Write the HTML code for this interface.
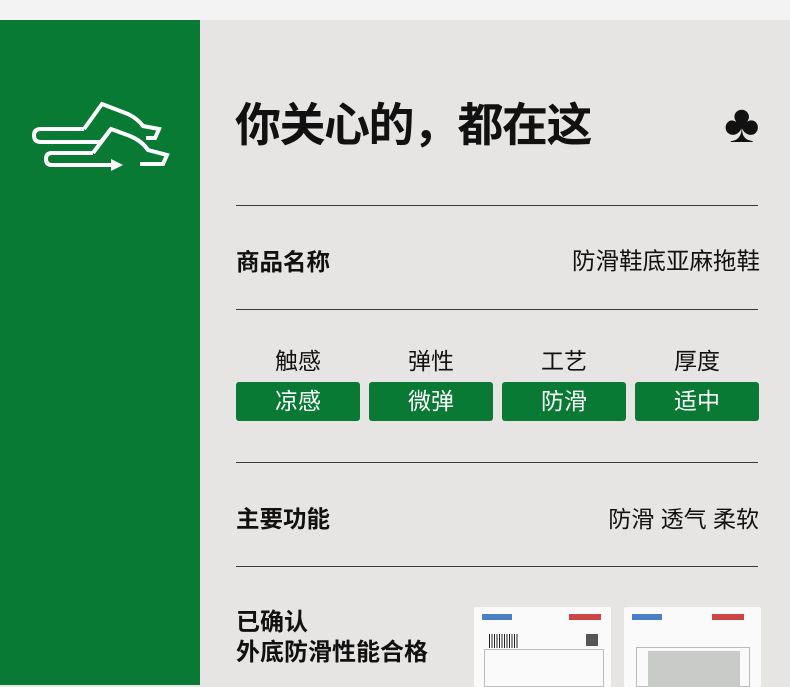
<!DOCTYPE html>
<html><head><meta charset="utf-8"><style>
*{margin:0;padding:0;box-sizing:border-box}
body{width:790px;height:685px;overflow:hidden;background:#e6e5e3;font-family:"Liberation Sans","Noto Sans CJK SC",sans-serif;color:#111;position:relative}
.top{position:absolute;left:0;top:0;width:790px;height:20px;background:#f3f3f3}
.green{position:absolute;left:0;top:20px;width:200px;height:665px;background:#087a33}
.t{position:absolute;white-space:nowrap}
.line{position:absolute;left:236px;width:522px;height:1px;background:#3a3a3a}
.btn{position:absolute;top:382px;width:124px;height:39px;background:#087a33;border-radius:3px;color:#fff;font-size:23px;text-align:center;line-height:39px}
.lab{position:absolute;top:346px;width:124px;text-align:center;font-size:23px;line-height:30px}
.doc{position:absolute;top:607px;width:137px;height:80px;background:#fafafa;border-radius:2px}
</style></head><body>
<div class="top"></div>
<div class="green"></div>
<svg width="200" height="685" style="position:absolute;left:0;top:0" viewBox="0 0 200 685">
<g fill="none" stroke="#fff" stroke-width="4" stroke-linejoin="miter" stroke-linecap="butt">
<path d="M84,129 L41,129 Q34,129 34,135.5 Q34,142 41,142 L101,142 L111,129 L130,136 Q142,141 148,150 L167,155 L163,164 L140,164"/>
<path d="M84,129 L102,104 L128,114 Q138,119 143,126 L159,129 L155,138 L146,138"/>
<path d="M93,153 L52,153 Q46,153 46,159 Q46,165 52,165 L112,165"/>
<path d="M93,153 L111,129"/>
</g>
<path d="M111,159 L123,165 L111,171 Z" fill="#fff"/>
</svg>
<div class="t" style="left:235px;top:89px;font-size:46px;font-weight:bold;letter-spacing:-1.5px">你关心的，都在这</div>
<div class="t" style="left:724px;top:94px;font-size:54px;line-height:60px">♣</div>
<div class="line" style="top:205px"></div>
<div class="t" style="left:236px;top:243px;font-size:23.5px;font-weight:bold">商品名称</div>
<div class="t" style="right:30px;top:242px;font-size:23.5px">防滑鞋底亚麻拖鞋</div>
<div class="line" style="top:309px"></div>
<div class="lab" style="left:236px">触感</div>
<div class="lab" style="left:369px">弹性</div>
<div class="lab" style="left:502px">工艺</div>
<div class="lab" style="left:635px">厚度</div>
<div class="btn" style="left:236px">凉感</div>
<div class="btn" style="left:369px">微弹</div>
<div class="btn" style="left:502px">防滑</div>
<div class="btn" style="left:635px">适中</div>
<div class="line" style="top:462px"></div>
<div class="t" style="left:236px;top:500px;font-size:23.5px;font-weight:bold">主要功能</div>
<div class="t" style="right:31px;top:500px;font-size:23px">防滑 透气 柔软</div>
<div class="line" style="top:566px"></div>
<div class="t" style="left:236px;top:608px;font-size:24px;font-weight:bold;line-height:30px">已确认<br>外底防滑性能合格</div>
<div class="doc" style="left:474px">
<div style="position:absolute;left:8px;top:7px;width:30px;height:6px;background:#4a7fc8"></div>
<div style="position:absolute;left:95px;top:7px;width:32px;height:6px;background:#c44"></div>
<div style="position:absolute;left:15px;top:27px;width:30px;height:14px;background:repeating-linear-gradient(90deg,#222 0 1px,#fff 1px 2.5px)"></div>
<div style="position:absolute;left:112px;top:27px;width:12px;height:12px;background:#555"></div>
<div style="position:absolute;left:10px;top:42px;width:120px;height:38px;border:1px solid #bbb"></div>
</div>
<div class="doc" style="left:624px">
<div style="position:absolute;left:8px;top:7px;width:30px;height:6px;background:#4a7fc8"></div>
<div style="position:absolute;left:88px;top:7px;width:32px;height:6px;background:#c44"></div>
<div style="position:absolute;left:12px;top:40px;width:114px;height:40px;border:1px solid #bbb"></div>
<div style="position:absolute;left:24px;top:44px;width:92px;height:36px;background:#c9cbc8"></div>
</div>
</body></html>
